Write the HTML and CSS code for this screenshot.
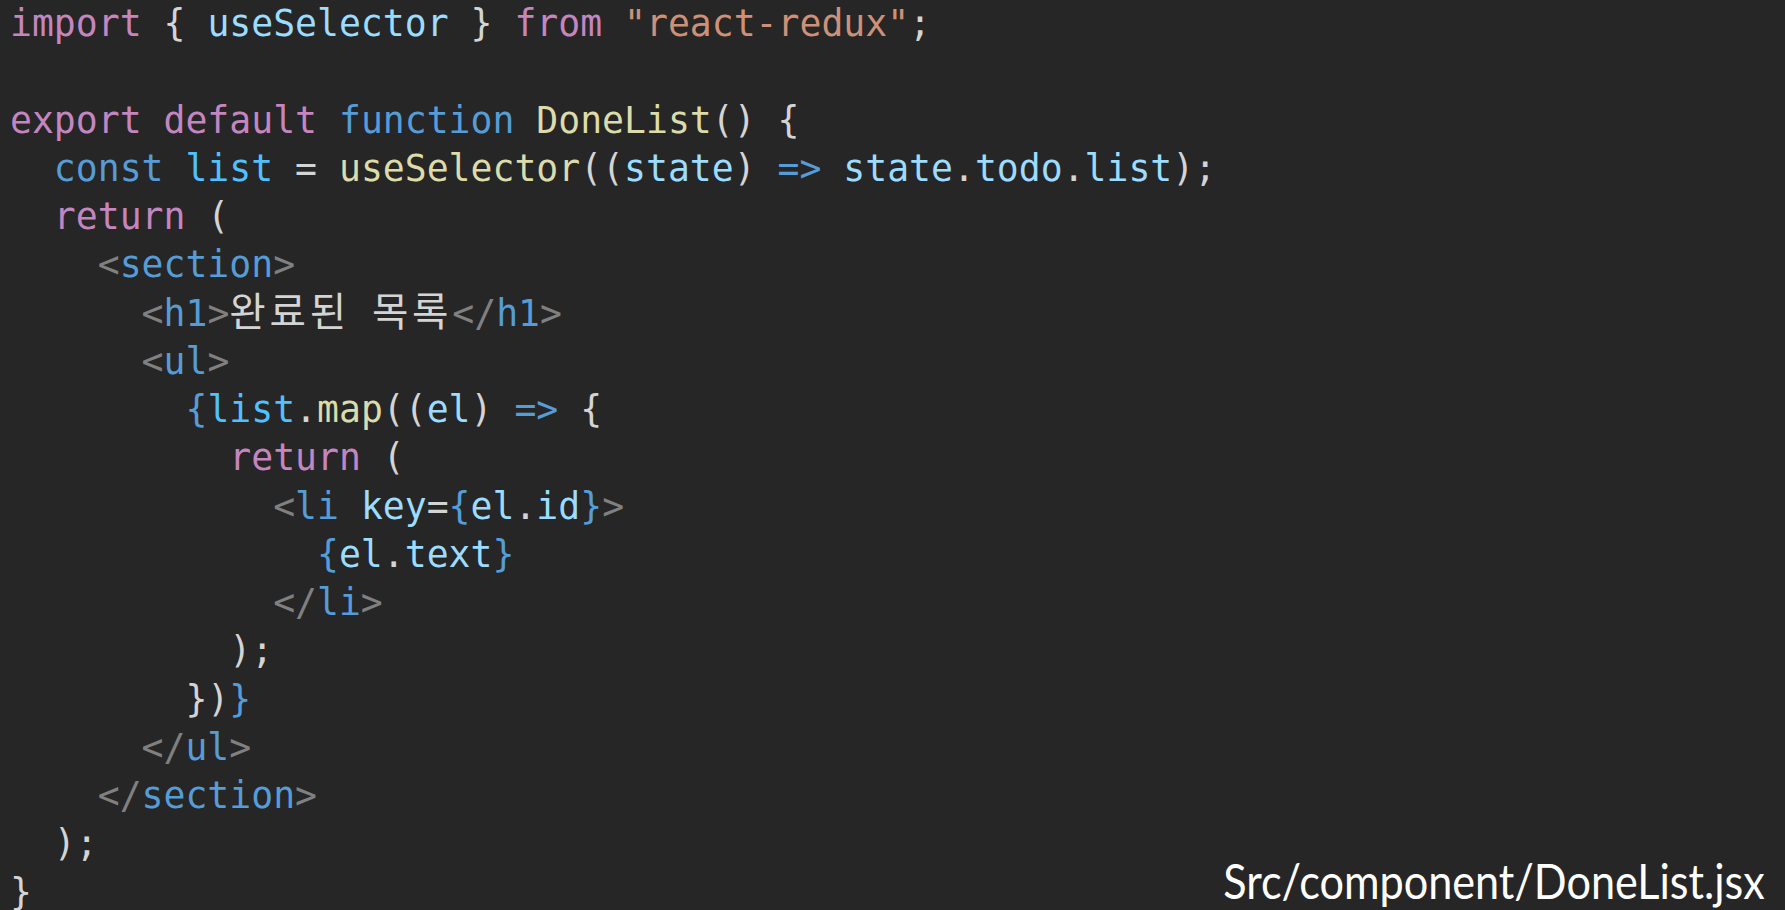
FILE: index.html
```html
<!DOCTYPE html>
<html lang="ko">
<head>
<meta charset="utf-8">
<title>DoneList.jsx</title>
<link rel="stylesheet" href="styles.css">
</head>
<body>
<main class="editor">
  <div class="code">
    <div class="ln"><span class="kw">import</span> { <span class="var">useSelector</span> } <span class="kw">from</span> <span class="str">"react-redux"</span>;</div>
    <div class="ln"></div>
    <div class="ln"><span class="kw">export</span> <span class="kw">default</span> <span class="st">function</span> <span class="fn">DoneList</span>() {</div>
    <div class="ln">  <span class="st">const</span> <span class="cst">list</span> = <span class="fn">useSelector</span>((<span class="var">state</span>) <span class="st">=&gt;</span> <span class="var">state</span>.<span class="var">todo</span>.<span class="var">list</span>);</div>
    <div class="ln">  <span class="kw">return</span> (</div>
    <div class="ln">    <span class="tg">&lt;</span><span class="st">section</span><span class="tg">&gt;</span></div>
    <div class="ln">      <span class="tg">&lt;</span><span class="st">h1</span><span class="tg">&gt;</span><span class="ko">완료된</span> <span class="ko">목록</span><span class="tg">&lt;/</span><span class="st">h1</span><span class="tg">&gt;</span></div>
    <div class="ln">      <span class="tg">&lt;</span><span class="st">ul</span><span class="tg">&gt;</span></div>
    <div class="ln">        <span class="st">{</span><span class="cst">list</span>.<span class="fn">map</span>((<span class="var">el</span>) <span class="st">=&gt;</span> {</div>
    <div class="ln">          <span class="kw">return</span> (</div>
    <div class="ln">            <span class="tg">&lt;</span><span class="st">li</span> <span class="var">key</span>=<span class="st">{</span><span class="var">el</span>.<span class="var">id</span><span class="st">}</span><span class="tg">&gt;</span></div>
    <div class="ln">              <span class="st">{</span><span class="var">el</span>.<span class="var">text</span><span class="st">}</span></div>
    <div class="ln">            <span class="tg">&lt;/</span><span class="st">li</span><span class="tg">&gt;</span></div>
    <div class="ln">          );</div>
    <div class="ln">        })<span class="st">}</span></div>
    <div class="ln">      <span class="tg">&lt;/</span><span class="st">ul</span><span class="tg">&gt;</span></div>
    <div class="ln">    <span class="tg">&lt;/</span><span class="st">section</span><span class="tg">&gt;</span></div>
    <div class="ln">  );</div>
    <div class="ln">}</div>
  </div>
  <div class="caption">Src/component/DoneList.jsx</div>
</main>
</body>
</html>
```

FILE: styles.css
```css
html, body {
  margin: 0;
  padding: 0;
  background: #262626;
}

.editor {
  position: relative;
  height: 100vh;
  overflow: hidden;
  background: #262626;
}

.code {
  padding-left: 10px;
  font-family: "DejaVu Sans Mono", "Liberation Mono", monospace;
  font-size: 36.43px;
  color: #d4d4d4;
}

.ln {
  height: 48.25px;
  line-height: 48.25px;
  white-space: pre;
}

.kw { color: #c586c0; }
.st { color: #569cd6; }
.fn { color: #dcdcaa; }
.var { color: #9cdcfe; }
.cst { color: #4fc1ff; }
.str { color: #ce9178; }
.tg { color: #808080; }

.ko {
  font-family: "Noto Sans CJK KR", sans-serif;
  font-size: 39.6px;
  letter-spacing: 3.8px;
  line-height: 0.9;
  color: #d4d4d4;
}

.caption {
  position: absolute;
  right: 20px;
  bottom: 5px;
  font-family: "Lato", "Noto Sans", sans-serif;
  font-size: 48px;
  line-height: 1;
  color: #ffffff;
  transform: scaleX(0.9);
  transform-origin: right bottom;
}
```
